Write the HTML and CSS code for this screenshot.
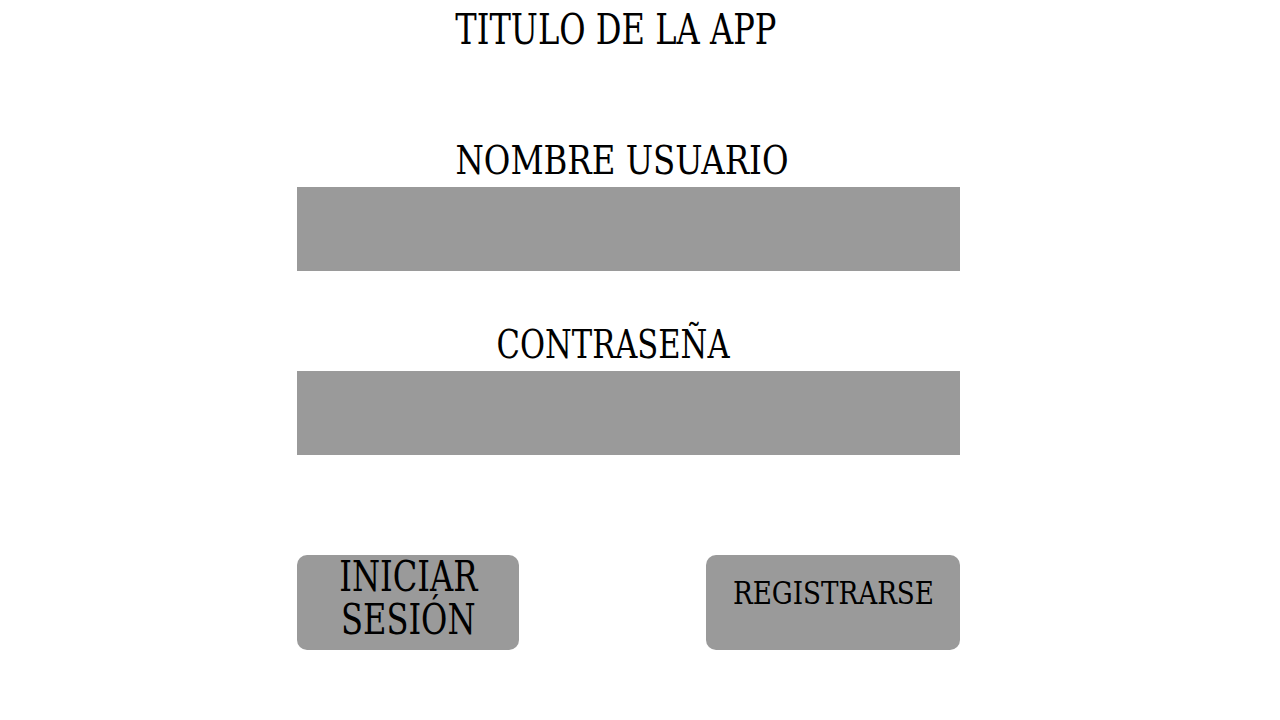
FILE: index.html
```html
<!DOCTYPE html>
<html>
  <head>
    <title>Titulo de la app</title>
    <meta name="viewport" content="width=device-width, initial-scale=1.0" />
    <link rel="stylesheet" href="styles.css">
  </head>
  <body>
    <div class="pantalla">
      <h1 class="titulo"><span class="texto">TITULO DE LA APP</span></h1>
      <form class="formulario">
        <label class="etiqueta etiqueta-usuario" for="usuario"><span class="texto">NOMBRE USUARIO</span></label>
        <input class="campo" type="text" id="usuario" name="usuario" />
        <label class="etiqueta etiqueta-clave" for="clave"><span class="texto">CONTRASEÑA</span></label>
        <input class="campo" type="password" id="clave" name="clave" />
        <div class="botones">
          <button type="submit" class="boton boton-iniciar"><span class="texto">INICIAR<br />SESIÓN</span></button>
          <button type="button" class="boton boton-registro"><span class="texto">REGISTRARSE</span></button>
        </div>
      </form>
    </div>
  </body>
</html>
```

FILE: styles.css
```css
body {
  margin: 0;
  background: #fff;
  font-family: "DejaVu Serif Condensed", "DejaVu Serif", serif;
  font-stretch: condensed;
  color: #000;
}
.texto {
  display: inline-block;
  transform: scaleX(0.85);
}
.pantalla {
  width: 663px;
  margin-left: 297px;
  display: flex;
  flex-direction: column;
}
.titulo {
  margin: 0;
  height: 60px;
  line-height: 60px;
  font-size: 42px;
  font-weight: normal;
  text-align: center;
  padding-right: 25px;
}
.formulario {
  display: flex;
  flex-direction: column;
  padding-top: 80px;
}
.etiqueta {
  display: block;
  height: 47px;
  line-height: 40px;
  font-size: 40px;
  text-align: center;
}
.etiqueta-usuario {
  padding-right: 14px;
}
.etiqueta-usuario .texto {
  transform: scaleX(0.9);
}
.etiqueta-clave {
  margin-top: 53px;
  padding-right: 30px;
}
.campo {
  height: 84px;
  border: none;
  background: #9a9a9a;
  padding: 0;
  margin: 0;
}
.botones {
  display: flex;
  justify-content: space-between;
  margin-top: 100px;
}
.boton {
  height: 95px;
  border: none;
  border-radius: 10px;
  background: #9a9a9a;
  font-family: inherit;
  font-stretch: condensed;
  color: #000;
  cursor: pointer;
  display: flex;
  justify-content: center;
  align-items: flex-start;
  padding: 0;
}
.boton-iniciar {
  width: 222px;
  font-size: 42px;
  line-height: 43px;
}
.boton-registro {
  width: 254px;
  font-size: 32px;
  line-height: 40px;
  padding-top: 18px;
}
.boton-registro .texto {
  transform: scaleX(0.91);
}
```
